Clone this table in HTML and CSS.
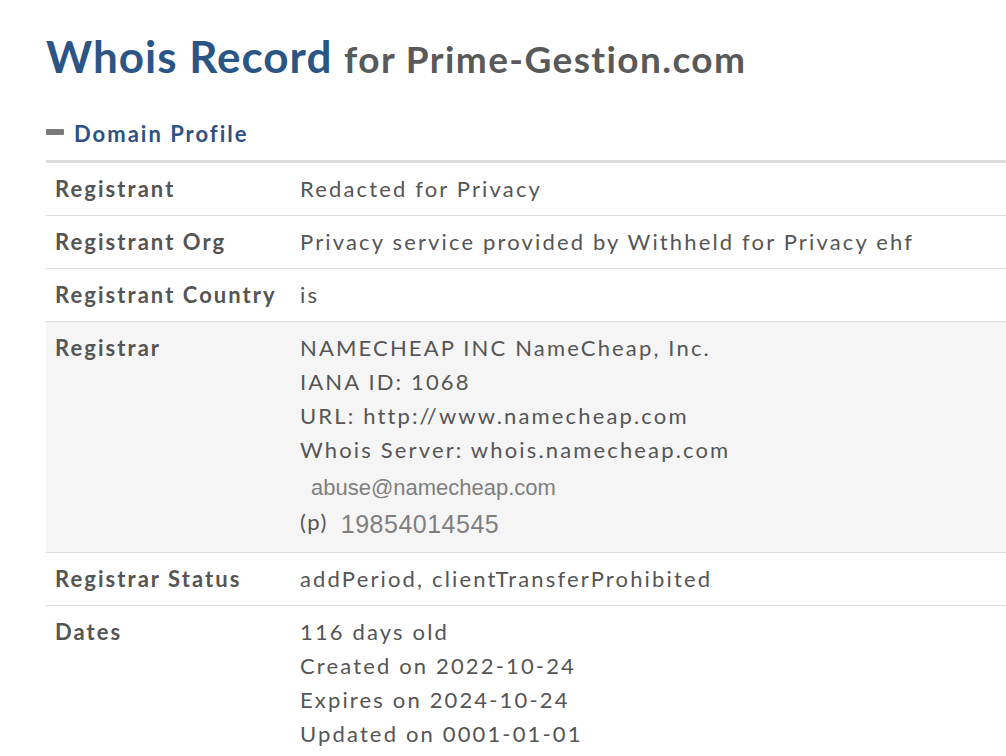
FILE: index.html
```html
<!DOCTYPE html>
<html>
<head>
<meta charset="utf-8">
<link rel="stylesheet" href="styles.css">
</head>
<body>
<div class="page">
  <h1 class="title">Whois Record <span class="title-sub">for Prime-Gestion.com</span></h1>
  <div class="section-head">
    <span class="collapse-icon"></span>
    <span class="section-title">Domain Profile</span>
  </div>
  <div class="profile">
    <div class="row">
      <div class="label">Registrant</div>
      <div class="value">Redacted for Privacy</div>
    </div>
    <div class="row">
      <div class="label">Registrant Org</div>
      <div class="value">Privacy service provided by Withheld for Privacy ehf</div>
    </div>
    <div class="row">
      <div class="label">Registrant Country</div>
      <div class="value">is</div>
    </div>
    <div class="row row-shaded">
      <div class="label">Registrar</div>
      <div class="value">
        <div>NAMECHEAP INC NameCheap, Inc.</div>
        <div>IANA ID: 1068</div>
        <div>URL: http://www.namecheap.com</div>
        <div>Whois Server: whois.namecheap.com</div>
        <div class="contact-email">abuse@namecheap.com</div>
        <div class="contact-line"><span class="phone-tag">(p)</span><span class="contact-phone">19854014545</span></div>
      </div>
    </div>
    <div class="row">
      <div class="label">Registrar Status</div>
      <div class="value">addPeriod, clientTransferProhibited</div>
    </div>
    <div class="row">
      <div class="label">Dates</div>
      <div class="value">
        <div>116 days old</div>
        <div>Created on 2022-10-24</div>
        <div>Expires on 2024-10-24</div>
        <div>Updated on 0001-01-01</div>
      </div>
    </div>
  </div>
</div>
</body>
</html>
```

FILE: styles.css
```css
html, body {
  margin: 0;
  padding: 0;
  background: #ffffff;
  overflow: hidden;
}
body {
  font-family: Lato, "Open Sans", sans-serif;
  color: #555555;
}
.page {
  padding: 25px 0 0 46px;
}
.title {
  margin: 0;
  font-size: 44px;
  font-weight: 700;
  line-height: 62px;
  color: #2b5585;
  letter-spacing: 1px;
  white-space: nowrap;
}
.title-sub {
  font-size: 37px;
  color: #595959;
  letter-spacing: 1.4px;
}
.section-head {
  display: flex;
  align-items: center;
  margin-top: 28px;
  height: 30px;
  gap: 10px;
}
.collapse-icon {
  width: 18px;
  height: 6px;
  background: #7b7b7b;
  border-radius: 1px;
  margin-top: -3px;
}
.section-title {
  font-size: 22px;
  font-weight: 700;
  color: #2d5282;
  letter-spacing: 2px;
}
.profile {
  margin-top: 12px;
  border-top: 3px solid #dddddd;
  width: 1000px;
}
.row {
  display: grid;
  grid-template-columns: 254px 1fr;
  border-bottom: 1px solid #dddddd;
  padding: 9px 0;
  font-size: 22px;
  line-height: 34px;
}
.row-shaded {
  background: #f5f5f5;
}
.label {
  padding-left: 9px;
  font-weight: 700;
  color: #555555;
  letter-spacing: 2.05px;
}
.value {
  color: #555555;
  letter-spacing: 2.15px;
  white-space: nowrap;
}
.contact-email {
  margin-top: 3px;
  padding-left: 11px;
  font-family: "Liberation Sans", Arial, sans-serif;
  font-size: 22px;
  line-height: 36px;
  color: #7f7f7f;
  letter-spacing: 0;
}
.contact-line {
  display: flex;
  align-items: baseline;
  line-height: 36px;
}
.phone-tag {
  letter-spacing: 1.5px;
  margin-right: 13px;
  position: relative;
  top: -3px;
}
.contact-phone {
  font-family: "Liberation Sans", Arial, sans-serif;
  font-size: 25px;
  color: #7f7f7f;
  letter-spacing: 0.5px;
}
```
